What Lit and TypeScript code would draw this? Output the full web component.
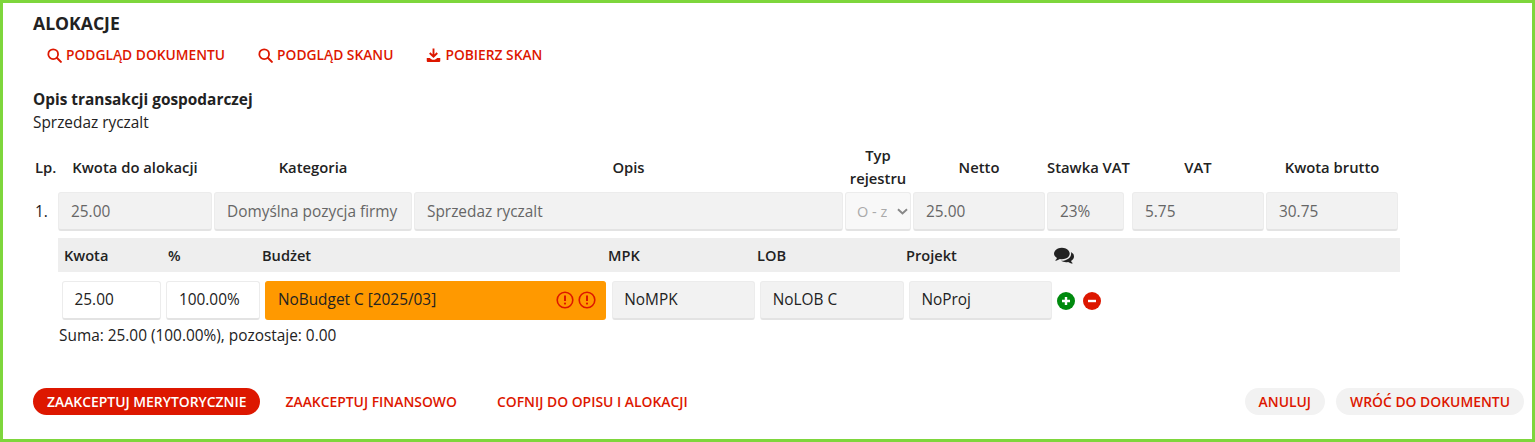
import { LitElement, html, css, svg } from "lit";
import { customElement } from "lit/decorators.js";

const SEARCH = svg`<svg class="ic" viewBox="0 0 16 16"><circle cx="6.600" cy="6.600" r="5.200" fill="none" stroke="currentColor" stroke-width="1.900"/><path d="M10.500 10.500 14.800 14.800" stroke="currentColor" stroke-width="2.200" stroke-linecap="round"/></svg>`;
const DOWNLOAD = svg`<svg class="ic" viewBox="0 0 16 16"><path d="M8 .5v8M4 5.300 8 9.300l4-4" fill="none" stroke="currentColor" stroke-width="2"/><path d="M.8 10.600h3.400c.8 1.200 2.200 1.900 3.800 1.900s3-.7 3.800-1.900h3.400v3.300c0 .6-.4 1-1 1H1.800c-.6 0-1-.4-1-1z" fill="currentColor"/></svg>`;
const COMMENTS = svg`<svg class="chat" viewBox="0 0 1792 1792"><path fill="currentColor" d="M1408 768q0 139-94 257t-256.500 186.500-353.500 68.500q-86 0-176-16-124 88-278 128-36 9-86 16h-3q-11 0-20.500-8t-11.500-21q-1-3-1-6.500t.5-6.500 2-6l2.500-5 3.500-5.500 4-5 4.500-5 4-4.500q5-6 23-25t26-29.500 22.500-29 25-38.500 20.500-44q-124-72-195-177t-71-224q0-139 94-257t256.500-186.500 353.500-68.500 353.500 68.500 256.500 186.500 94 257zm384 256q0 120-71 224.500t-195 176.500q10 24 20.500 44t25 38.500 22.500 29 26 29.500 23 25q1 1 4 4.500t4.500 5 4 5 3.500 5.500l2.500 5 2 6 .5 6.500-1 6.500q-3 14-13 22t-22 7q-50-7-86-16-154-40-278-128-90 16-176 16-271 0-472-132 58 4 88 4 161 0 309-45t264-129q125-92 192-212t67-254q0-77-23-152 129 71 204 178t75 230z"/></svg>`;
const WARN = svg`<svg class="warn" viewBox="0 0 18 18"><circle cx="9" cy="9" r="7.800" fill="none" stroke="currentColor" stroke-width="1.600"/><path d="M9 4.600v5.400" stroke="currentColor" stroke-width="2"/><circle cx="9" cy="12.600" r="1.100" fill="currentColor"/></svg>`;
const PLUS = svg`<svg class="round" viewBox="0 0 18 18"><circle cx="9" cy="9" r="9" fill="#008a0e"/><path d="M9 5v8M5 9h8" stroke="#fff" stroke-width="2.400"/></svg>`;
const MINUS = svg`<svg class="round" viewBox="0 0 18 18"><circle cx="9" cy="9" r="9" fill="#dd1700"/><path d="M5 9h8" stroke="#fff" stroke-width="2.400"/></svg>`;

const HEADS = ["Lp.", "Kwota do alokacji", "Kategoria", "Opis", "Typ rejestru", "Netto", "Stawka VAT", "VAT", "Kwota brutto"];

@customElement("app-root")
export class AppRoot extends LitElement {
  static styles = css`
    :host {
      display: block;
      box-sizing: border-box;
      width: 1535px;
      height: 442px;
      border: 3px solid #7ed63c;
      padding: 10px 8px 0 30px;
      background: #fff;
      color: #222;
      font-family: "Open Sans", sans-serif;
      font-size: 15.400px;
      overflow: hidden;
    }

    h1 {
      margin: 0;
      font-size: 17.600px;
      line-height: 20px;
      font-weight: 700;
      color: #222;
    }

    .links {
      display: flex;
      gap: 33px;
      margin: 12px 0 0 14px;
      height: 20px;
    }

    .link {
      display: inline-flex;
      align-items: center;
      gap: 4px;
      color: #dd1700;
      font-size: 13.800px;
      font-weight: 600;
      line-height: 20px;
      white-space: nowrap;
    }

    .ic {
      width: 15px;
      height: 15px;
      flex: none;
    }

    .desc-title {
      margin-top: 25px;
      font-weight: 700;
      line-height: 20px;
    }

    .desc {
      margin-top: 3px;
      line-height: 20px;
    }

    .main {
      display: grid;
      grid-template-columns: 23px 154px 198px 429px 66px 132px 83px 132px 132px;
      column-gap: 2px;
      width: 1365px;
      margin-top: 13px;
    }

    .head {
      display: flex;
      align-items: center;
      justify-content: center;
      box-sizing: border-box;
      height: 45px;
      padding-bottom: 3px;
      font-size: 14.800px;
      font-weight: 600;
      line-height: 23px;
      text-align: center;
      white-space: nowrap;
    }

    .head.wrap {
      white-space: normal;
    }

    .head.lp {
      justify-content: flex-start;
      padding-left: 2px;
    }

    .lp-cell {
      display: flex;
      align-items: center;
      height: 39px;
      margin-top: 2px;
      padding: 1px 0 0 2px;
      box-sizing: border-box;
      line-height: 20px;
    }

    .field {
      box-sizing: border-box;
      display: flex;
      align-items: center;
      height: 39px;
      padding: 1px 12px 0;
      background: #f2f2f2;
      border: 1px solid #ececec;
      border-bottom: 2px solid #e3e3e3;
      border-radius: 3px;
      line-height: 20px;
      white-space: nowrap;
      overflow: hidden;
    }

    .main .field {
      margin-top: 1px;
      color: #666;
    }

    .main .lp-cell {
      margin-top: 1px;
    }

    .field.rate {
      width: 77px;
    }

    .main .field.select {
      justify-content: space-between;
      padding: 1px 2px 0 11px;
      background: #f8f8f8;
      color: #aaa;
    }

    .clip {
      width: 30px;
      overflow: hidden;
      font-size: 14.500px;
    }

    .chev {
      width: 11px;
      height: 7px;
      flex: none;
    }

    .band {
      display: grid;
      grid-template-columns: 104px 94px 346px 149px 149px 148px auto;
      align-items: center;
      box-sizing: border-box;
      width: 1342px;
      height: 34px;
      margin: 7px 0 0 25px;
      padding-left: 6px;
      background: #eee;
      font-size: 14.600px;
      font-weight: 600;
    }

    .chat {
      display: block;
      width: 20px;
      height: 20px;
    }

    .alloc {
      display: grid;
      grid-template-columns: 99px 93.600px 341px 143px 143.400px 143px auto;
      column-gap: 5.400px;
      margin: 9px 0 0 29px;
    }

    .alloc .field {
      padding: 0 11.500px;
    }

    .field.white {
      background: #fff;
      color: #222;
    }

    .alloc .field.budget {
      justify-content: space-between;
      background: #ff9900;
      border-color: #ff9900;
      padding-right: 9px;
    }

    .warns {
      display: flex;
      gap: 4px;
      color: #dd1700;
    }

    .warn {
      width: 18px;
      height: 18px;
    }

    .tools {
      display: flex;
      align-items: center;
      gap: 8px;
    }

    .round {
      width: 18px;
      height: 18px;
    }

    .sum {
      margin: 6px 0 0 26px;
      line-height: 20px;
    }

    .actions {
      display: flex;
      align-items: center;
      margin-top: 42px;
      height: 27px;
    }

    .btn {
      display: inline-flex;
      align-items: center;
      height: 27px;
      padding: 0 14px;
      border-radius: 14px;
      color: #dd1700;
      font-size: 13.900px;
      font-weight: 600;
      white-space: nowrap;
    }

    .btn.primary {
      background: #dd1700;
      color: #fff;
      margin-right: 11px;
    }

    .btn.plain {
      margin-right: 12px;
    }

    .btn.soft {
      background: #f2f2f2;
      margin-left: 11px;
    }

    .spacer {
      flex: 1;
    }
  `;

  render() {
    return html`
      <h1>ALOKACJE</h1>
      <div class="links">
        <span class="link">${SEARCH}PODGLĄD DOKUMENTU</span>
        <span class="link">${SEARCH}PODGLĄD SKANU</span>
        <span class="link">${DOWNLOAD}POBIERZ SKAN</span>
      </div>
      <div class="desc-title">Opis transakcji gospodarczej</div>
      <div class="desc">Sprzedaz ryczalt</div>

      <div class="main">
        ${HEADS.map((h, i) => html`<div class="head ${i === 0 ? "lp" : i === 4 ? "wrap" : ""}">${h}</div>`)}
        <div class="lp-cell">1.</div>
        <div class="field">25.00</div>
        <div class="field">Domyślna pozycja firmy</div>
        <div class="field">Sprzedaz ryczalt</div>
        <div class="field select">
          <span class="clip">O - zakup</span>
          <svg class="chev" viewBox="0 0 11 7"><path d="M1 1.200 5.500 5.400 10 1.200" fill="none" stroke="#888" stroke-width="2"/></svg>
        </div>
        <div class="field">25.00</div>
        <div class="field rate">23%</div>
        <div class="field">5.75</div>
        <div class="field">30.75</div>
      </div>

      <div class="band">
        <span>Kwota</span><span>%</span><span>Budżet</span><span>MPK</span><span>LOB</span><span>Projekt</span>
        ${COMMENTS}
      </div>

      <div class="alloc">
        <div class="field white">25.00</div>
        <div class="field white">100.00%</div>
        <div class="field budget">
          <span>NoBudget C [2025/03]</span>
          <span class="warns">${WARN}${WARN}</span>
        </div>
        <div class="field">NoMPK</div>
        <div class="field">NoLOB C</div>
        <div class="field">NoProj</div>
        <div class="tools">${PLUS}${MINUS}</div>
      </div>

      <div class="sum">Suma: 25.00 (100.00%), pozostaje: 0.00</div>

      <div class="actions">
        <span class="btn primary">ZAAKCEPTUJ MERYTORYCZNIE</span>
        <span class="btn plain">ZAAKCEPTUJ FINANSOWO</span>
        <span class="btn plain">COFNIJ DO OPISU I ALOKACJI</span>
        <span class="spacer"></span>
        <span class="btn soft">ANULUJ</span>
        <span class="btn soft">WRÓĆ DO DOKUMENTU</span>
      </div>
    `;
  }
}
